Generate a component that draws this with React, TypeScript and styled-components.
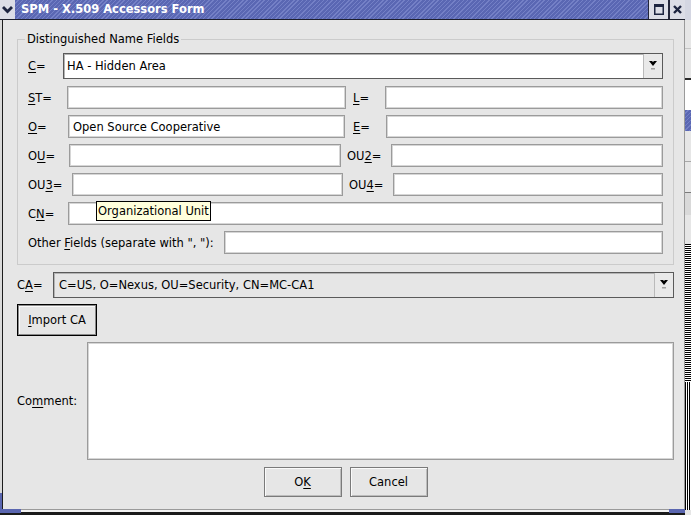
import React from 'react';
import styled, { createGlobalStyle, css } from 'styled-components';

const GlobalStyle = createGlobalStyle`
  html, body {
    margin: 0;
    padding: 0;
    background: #e6e6e6;
  }
  body {
    font-family: "DejaVu Sans", "Liberation Sans", sans-serif;
    font-size: 11.5px;
    color: #000;
  }
  #root {
    width: 691px;
    height: 515px;
    overflow: hidden;
  }
`;

const hatch = 'repeating-linear-gradient(135deg, #5a67b3 0 2px, #7480c6 2px 3px)';

const Desktop = styled.div`
  display: flex;
  width: 691px;
  height: 515px;
  overflow: hidden;
`;

const Window = styled.div`
  width: 685px;
  height: 515px;
  flex-shrink: 0;
  display: flex;
  flex-direction: column;
  background: #e6e6e6;
`;

/* title bar */
const TitleBar = styled.div`
  display: flex;
  height: 19px;
  flex-shrink: 0;
  border-bottom: 1px solid #1c1e2c;
`;

const MenuButton = styled.div`
  width: 15px;
  background: #dcdde6;
  display: flex;
  align-items: center;
  justify-content: center;
`;

const TitleText = styled.div`
  flex: 1;
  background: ${hatch};
  color: #fff;
  font-weight: bold;
  font-size: 11.5px;
  line-height: 19px;
  padding-left: 6px;
  border-right: 1px solid #23263a;
  white-space: nowrap;
`;

const FrameButton = styled.div<{ $w: number }>`
  width: ${p => p.$w}px;
  background: #dcdde6;
  display: flex;
  align-items: center;
  justify-content: center;
  & + & {
    border-left: 2px solid #23263a;
  }
`;

/* window frame */
const Middle = styled.div`
  display: flex;
  flex: 1;
  min-height: 0;
`;

const LeftFrame = styled.div`
  width: 3px;
  display: flex;
  flex-direction: column;
`;

const FrameEdge = styled.div<{ $blue?: boolean }>`
  flex: ${p => (p.$blue ? '0 0 16px' : '1')};
  background: linear-gradient(
    to right,
    ${p => (p.$blue ? '#5a66b0' : '#dadada')} 0 2px,
    #1c1c1c 2px 3px
  );
`;

const RightFrame = styled.div`
  width: 1px;
  background: #9a9a9a;
`;

const BottomFrame = styled.div`
  display: flex;
  height: 6px;
  flex-shrink: 0;
`;

const BottomEdge = styled.div`
  flex: 1;
  background: linear-gradient(to bottom, #9a9a9a 0 1px, #f2f2f2 1px 3px, #1a1a1a 3px);
`;

const BottomCorner = styled.div<{ $w: number }>`
  width: ${p => p.$w}px;
  background: linear-gradient(to bottom, #5a66b0 0 4px, #1a1a1a 4px);
`;

/* dialog body */
const Body = styled.div`
  flex: 1;
  display: flex;
  flex-direction: column;
  gap: 6px;
  padding: 12px 10px 0 14px;
  min-width: 0;
`;

const GroupBox = styled.fieldset`
  margin: 0;
  padding: 7px 10px 10px 10px;
  border: 1px solid #cbcbcb;
  display: flex;
  flex-direction: column;
  gap: 6px;
  min-width: 0;
`;

const Legend = styled.legend`
  padding: 0 2px;
  margin-left: -3px;
  line-height: 14px;
  font-size: 11.5px;
`;

const Row = styled.div<{ $cols: string; $h?: number }>`
  display: grid;
  grid-template-columns: ${p => p.$cols};
  align-items: center;
  height: ${p => p.$h ?? 23}px;
`;

const Label = styled.label<{ $indent?: number }>`
  white-space: nowrap;
  padding-left: ${p => p.$indent ?? 0}px;
  u {
    text-underline-offset: 2px;
  }
`;

const TextInput = styled.input`
  box-sizing: border-box;
  width: 100%;
  min-width: 0;
  height: 23px;
  margin: 0;
  padding: 0 4px;
  border: 1px solid #9b9b9b;
  box-shadow: inset 0 0 0 1px #d6d6d6;
  background: #fff;
  font: inherit;
  color: #000;
  outline: none;
`;

const Combo = styled.div<{ $editable?: boolean }>`
  box-sizing: border-box;
  height: 26px;
  display: flex;
  border: 1px solid #5a5a5a;
  background: ${p => (p.$editable ? '#fff' : '#e6e6e6')};
  box-shadow: inset 1px 1px 0 #b4b4b4;
`;

const ComboText = styled.div<{ $pad: number }>`
  flex: 1;
  display: flex;
  align-items: center;
  padding-left: ${p => p.$pad}px;
  white-space: nowrap;
`;

const ComboButton = styled.div`
  width: 18px;
  border-left: 1px solid #bababa;
  background: #e9e9e9;
  display: flex;
  align-items: center;
  justify-content: center;
`;

const TipAnchor = styled.div`
  position: relative;
`;

const Tooltip = styled.div`
  position: absolute;
  left: 28px;
  top: -1px;
  height: 20px;
  box-sizing: border-box;
  padding: 0 1px;
  border: 1px solid #000;
  background: #ffffdc;
  line-height: 18px;
  white-space: nowrap;
`;

const PushButton = styled.button<{ $default?: boolean; $w: number; $h: number }>`
  box-sizing: border-box;
  width: ${p => p.$w}px;
  height: ${p => p.$h}px;
  margin: 0;
  padding: 0;
  font: inherit;
  color: #000;
  background: #e6e6e6;
  border: 1px solid ${p => (p.$default ? '#000' : '#7a7a7a')};
  box-shadow: ${p =>
    p.$default
      ? 'inset 0 0 0 1px #8a8a8a, inset 2px 2px 0 #fafafa'
      : 'inset 1px 1px 0 #fafafa, inset -1px -1px 0 #bcbcbc'};
  u {
    text-underline-offset: 2px;
  }
`;

const ImportRow = styled.div`
  display: flex;
`;

const CommentArea = styled.textarea`
  box-sizing: border-box;
  width: 100%;
  height: 118px;
  margin: 0;
  resize: none;
  border: 1px solid #9b9b9b;
  box-shadow: inset 0 0 0 1px #d6d6d6;
  background: #fff;
  font: inherit;
  outline: none;
`;

const ButtonRow = styled.div`
  display: flex;
  justify-content: center;
  gap: 8px;
  margin-top: 1px;
`;

/* part of a window behind */
const Strip = styled.div`
  width: 6px;
  flex-shrink: 0;
  display: flex;
  flex-direction: column;
`;

const StripPart = styled.div<{ $h?: number; $bg: string }>`
  ${p => (p.$h ? css`height: ${p.$h}px;` : css`flex: 1;`)}
  flex-shrink: 0;
  background: ${p => p.$bg};
`;

const stripParts = [
  { h: 20, bg: '#d4d6e2' },
  { h: 28, bg: '#e6e6e6' },
  { h: 1, bg: '#c4c4c4' },
  { h: 29, bg: '#e6e6e6' },
  { h: 2, bg: '#2a2a2a' },
  { h: 30, bg: '#ffffff' },
  { h: 21, bg: hatch },
  { h: 30, bg: '#e6e6e6' },
  { h: 1, bg: '#a8a8a8' },
  { h: 30, bg: '#e6e6e6' },
  { h: 1, bg: '#7a7a7a' },
  { h: 22, bg: '#d9d9d9' },
  { h: 29, bg: '#e6e6e6' },
  { h: 138, bg: 'repeating-linear-gradient(to bottom, #000 0 1px, #fff 1px 2px)' },
  { h: 128, bg: 'repeating-linear-gradient(to right, #000 0 1px, #fff 1px 2px)' },
  { h: 0, bg: '#e6e6e6' },
];

const ComboArrow = () => (
  <svg width="8" height="10" viewBox="0 0 8 10">
    <path d="M0 0 H3 L4 1 L5 0 H8 L4 5 Z" fill="#000" />
    <rect x="2" y="7" width="4" height="1.5" fill="#a0a0a0" />
  </svg>
);

const App = () => {
  return (
    <Desktop>
      <GlobalStyle />
      <Window>
        <TitleBar>
          <MenuButton>
            <svg width="11" height="8" viewBox="0 0 11 8">
              <path d="M0 2 L2 0 L5.5 3.5 L9 0 L11 2 L5.5 7.5 Z" fill="#1d2440" />
            </svg>
          </MenuButton>
          <TitleText>SPM - X.509 Accessors Form</TitleText>
          <FrameButton $w={19}>
            <svg width="10" height="11" viewBox="0 0 10 11">
              <rect x="0.75" y="0.75" width="8.5" height="9.5" fill="none" stroke="#1d2440" strokeWidth="1.5" />
              <rect x="0" y="0" width="10" height="3" fill="#1d2440" />
            </svg>
          </FrameButton>
          <FrameButton $w={15}>
            <svg width="9" height="9" viewBox="0 0 9 9">
              <path d="M1 1 L8 8 M8 1 L1 8" stroke="#1d2440" strokeWidth="2.4" />
            </svg>
          </FrameButton>
        </TitleBar>

        <Middle>
          <LeftFrame>
            <FrameEdge />
            <FrameEdge $blue />
          </LeftFrame>

          <Body>
            <GroupBox>
              <Legend>Distinguished Name Fields</Legend>

              <Row $cols="35px 1fr" $h={26} style={{ marginBottom: 1 }}>
                <Label><u>C</u>=</Label>
                <Combo $editable>
                  <ComboText $pad={3}>HA - Hidden Area</ComboText>
                  <ComboButton><ComboArrow /></ComboButton>
                </Combo>
              </Row>

              <Row $cols="39px 279px 39px 1fr">
                <Label><u>S</u>T=</Label>
                <TextInput defaultValue="" />
                <Label $indent={7}><u>L</u>=</Label>
                <TextInput defaultValue="" />
              </Row>

              <Row $cols="40px 277px 41px 1fr">
                <Label><u>O</u>=</Label>
                <TextInput defaultValue="Open Source Cooperative" />
                <Label $indent={8}><u>E</u>=</Label>
                <TextInput defaultValue="" />
              </Row>

              <Row $cols="41px 272px 50px 1fr">
                <Label>O<u>U</u>=</Label>
                <TextInput defaultValue="" />
                <Label $indent={6}>OU<u>2</u>=</Label>
                <TextInput defaultValue="" />
              </Row>

              <Row $cols="44px 271px 50px 1fr">
                <Label>OU<u>3</u>=</Label>
                <TextInput defaultValue="" />
                <Label $indent={6}>OU<u>4</u>=</Label>
                <TextInput defaultValue="" />
              </Row>

              <Row $cols="40px 1fr">
                <Label>C<u>N</u>=</Label>
                <TipAnchor>
                  <TextInput defaultValue="" />
                  <Tooltip>Organizational Unit</Tooltip>
                </TipAnchor>
              </Row>

              <Row $cols="196px 1fr">
                <Label>Other <u>F</u>ields (separate with ", "):</Label>
                <TextInput defaultValue="" />
              </Row>
            </GroupBox>

            <Row $cols="36px 1fr" $h={26} style={{ marginTop: 1 }}>
              <Label>C<u>A</u>=</Label>
              <Combo>
                <ComboText $pad={5}>C=US, O=Nexus, OU=Security, CN=MC-CA1</ComboText>
                <ComboButton><ComboArrow /></ComboButton>
              </Combo>
            </Row>

            <ImportRow>
              <PushButton $default $w={80} $h={32}><u>I</u>mport CA</PushButton>
            </ImportRow>

            <Row $cols="70px 1fr" $h={118}>
              <Label>Co<u>m</u>ment:</Label>
              <CommentArea defaultValue="" />
            </Row>

            <ButtonRow>
              <PushButton $w={78} $h={30}>O<u>K</u></PushButton>
              <PushButton $w={78} $h={30}>Cancel</PushButton>
            </ButtonRow>
          </Body>

          <RightFrame />
        </Middle>

        <BottomFrame>
          <BottomCorner $w={21} />
          <BottomEdge />
          <BottomCorner $w={16} />
        </BottomFrame>
      </Window>

      <Strip>
        {stripParts.map((part, i) => (
          <StripPart key={i} $h={part.h || undefined} $bg={part.bg} />
        ))}
      </Strip>
    </Desktop>
  );
};

export default App;
